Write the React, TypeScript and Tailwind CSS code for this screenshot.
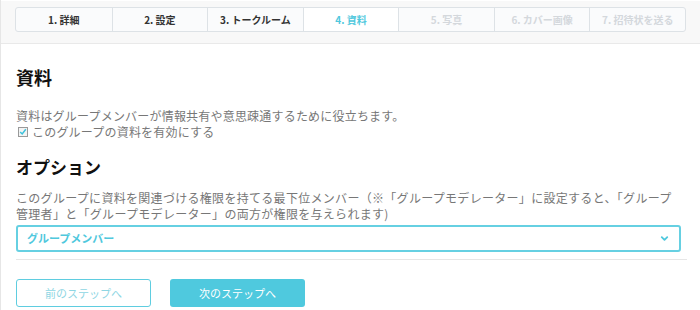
import { ChevronDown } from 'lucide-react'

const steps = [
  { label: '1. 詳細', state: 'done' },
  { label: '2. 設定', state: 'done' },
  { label: '3. トークルーム', state: 'done' },
  { label: '4. 資料', state: 'active' },
  { label: '5. 写真', state: 'todo' },
  { label: '6. カバー画像', state: 'todo' },
  { label: '7. 招待状を送る', state: 'todo' },
]

export default function App() {
  return (
    <div
      className="w-[700px] h-[310px] overflow-hidden bg-white border-l border-[#e6e6e6]"
      style={{ fontFamily: '"Noto Sans CJK JP", "Noto Sans", sans-serif' }}
    >
      {/* step tabs */}
      <div className="h-[44px] bg-[#f8f8f8] border-b border-[#e9e9e9] border-t border-t-white pt-[6px] px-[14px]">
        <div className="grid grid-cols-7 h-[25px] border border-[#dde2e6] rounded-[3px] bg-[#fafbfc]">
          {steps.map((s, i) => (
            <div
              key={s.label}
              className={
                'flex items-center justify-center text-[10px] font-bold ' +
                (i > 0 ? 'border-l border-[#dde2e6] ' : '') +
                (s.state === 'active'
                  ? 'text-[#4fc8dd] bg-white'
                  : s.state === 'todo'
                    ? 'text-[#d4d8dc]'
                    : 'text-[#333]')
              }
            >
              {s.label}
            </div>
          ))}
        </div>
      </div>

      <div className="px-[15px]">
        <h2 className="mt-[21px] text-[18px] leading-[24px] font-bold text-[#111]">資料</h2>
        <p className="mt-[19px] text-[12px] leading-[16px] tracking-[0.2px] text-[#777]">
          資料はグループメンバーが情報共有や意思疎通するために役立ちます。
        </p>
        <label className="flex items-center gap-[4px] text-[12px] leading-[16px] tracking-[0.2px] text-[#777]">
          <span className="ml-[2px] w-[10px] h-[10px] border border-[#999] bg-[#f3f3f3] flex items-center justify-center">
            <svg viewBox="0 0 10 10" className="w-[8px] h-[8px]">
              <path d="M1.5 5 L4 7.5 L8.5 1.5" stroke="#3cc2dc" strokeWidth="1.8" fill="none" />
            </svg>
          </span>
          このグループの資料を有効にする
        </label>

        <h3 className="mt-[16px] text-[17px] leading-[22px] font-bold text-[#111]">オプション</h3>
        <p className="mt-[12px] w-[670px] text-[12px] leading-[16px] tracking-[0.3px] text-[#777]">
          このグループに資料を関連づける権限を持てる最下位メンバー（※「グループモデレーター」に設定すると、「グループ
          <br />
          管理者」と「グループモデレーター」の両方が権限を与えられます)
        </p>
        <div className="mt-[3px] w-[665px] h-[27px] border-2 border-[#66d0e2] rounded-[3px] flex items-center justify-between pl-[9px] pr-[9px]">
          <span className="text-[11px] font-bold text-[#4fc8dd]">グループメンバー</span>
          <ChevronDown className="w-[11px] h-[11px] text-[#4fc8dd]" strokeWidth={4} />
        </div>
        <div className="mt-[7px] w-[671px] border-t border-[#e6e6e6]" />

        <div className="mt-[19px] flex gap-[19px]">
          <button className="w-[135px] h-[28px] border-[1.5px] border-[#5fcde0] rounded-[3px] bg-white text-[11px] text-[#8fd6e3]">
            前のステップへ
          </button>
          <button className="w-[135px] h-[28px] rounded-[3px] bg-[#4fc9de] text-[11px] text-white">
            次のステップへ
          </button>
        </div>
      </div>
    </div>
  )
}
